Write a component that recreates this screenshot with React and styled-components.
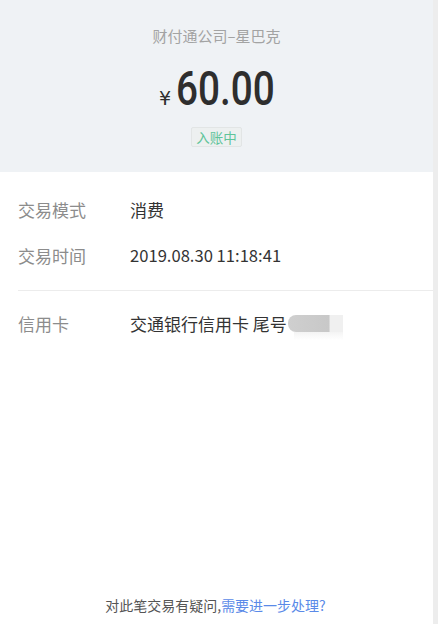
import React from "react";
import styled, { createGlobalStyle } from "styled-components";

const Global = createGlobalStyle`
  html, body { margin: 0; padding: 0; background: #fff; }
  body { font-family: "Noto Sans CJK SC", "Noto Sans", sans-serif; }
`;

const Shell = styled.div`
  display: flex;
  min-height: 100vh;
`;

const Main = styled.div`
  flex: 1;
  display: flex;
  flex-direction: column;
  background: #fff;
`;

const Gutter = styled.div`
  width: 5px;
  background: #ededed;
`;

const Header = styled.header`
  height: 172px;
  background: #eff2f5;
  display: flex;
  flex-direction: column;
  align-items: center;
  box-sizing: border-box;
  padding-top: 26px;
`;

const Merchant = styled.div`
  font-size: 15px;
  line-height: 20px;
  color: #a3a3a3;
`;

const Amount = styled.div`
  display: flex;
  align-items: baseline;
  margin-top: 15px;
  color: #2e2e2e;
  height: 56px;
`;

const Yen = styled.span`
  font-family: "DejaVu Sans", sans-serif;
  font-size: 19px;
  margin-right: 5px;
`;

const FigureBox = styled.span`
  display: inline-block;
  width: 98px;
  overflow: visible;
  white-space: nowrap;
`;

const Figure = styled.span`
  display: inline-block;
  font-family: Roboto, "Liberation Sans", sans-serif;
  font-weight: 500;
  font-size: 49px;
  line-height: 56px;
  transform: scaleX(0.79);
  transform-origin: left center;
`;

const Badge = styled.span`
  margin-top: 10px;
  display: inline-flex;
  align-items: center;
  height: 20px;
  box-sizing: border-box;
  padding: 0 4px;
  font-size: 13.5px;
  color: #5fc49a;
  background: #edf0f0;
  border: 1px solid #e2e5e5;
  border-radius: 2px;
`;

const Section = styled.section`
  padding: ${(p) => p.$pad};
  margin-left: 18px;
  border-bottom: ${(p) => (p.$divider ? "1px solid #ececec" : "none")};
`;

const Row = styled.div`
  display: flex;
  align-items: center;
  height: 46px;
  font-size: 17px;
`;

const Label = styled.span`
  width: 112px;
  color: #8c8c8c;
`;

const Value = styled.span`
  color: #333;
  display: flex;
  align-items: center;
  font-size: ${(p) => (p.$num ? "16.6px" : "17px")};
`;

const Mask = styled.span`
  position: relative;
  display: inline-block;
  width: 55px;
  height: 17px;
  margin-left: 1px;
  background: linear-gradient(to right, #cfcfcf 0%, #c8c8c8 75%, #f0f0f0 76%, #f0f0f0 100%);
  border-radius: 8px 0 0 8px;
  &::after {
    content: "";
    position: absolute;
    left: 6px;
    right: 0;
    top: 17px;
    height: 8px;
    background: linear-gradient(to bottom, #f4f4f4, #fff);
  }
`;

const Spacer = styled.div`
  flex: 1;
`;

const Footer = styled.footer`
  text-align: center;
  font-size: 14px;
  line-height: 20px;
  color: #555;
  padding-bottom: 9px;
  padding-right: 2px;
`;

const Link = styled.a`
  color: #5a8ae8;
  text-decoration: none;
`;

export default function App() {
  return (
    <>
      <Global />
      <Shell>
        <Main>
          <Header>
            <Merchant>财付通公司–星巴克</Merchant>
            <Amount>
              <Yen>¥</Yen>
              <FigureBox>
                <Figure>60.00</Figure>
              </FigureBox>
            </Amount>
            <Badge>入账中</Badge>
          </Header>
          <Section $pad="14px 0 12px" $divider>
            <Row>
              <Label>交易模式</Label>
              <Value>消费</Value>
            </Row>
            <Row>
              <Label>交易时间</Label>
              <Value $num>2019.08.30 11:18:41</Value>
            </Row>
          </Section>
          <Section $pad="9px 0 0">
            <Row>
              <Label>信用卡</Label>
              <Value>
                交通银行信用卡 尾号
                <Mask />
              </Value>
            </Row>
          </Section>
          <Spacer />
          <Footer>
            对此笔交易有疑问,<Link href="#">需要进一步处理?</Link>
          </Footer>
        </Main>
        <Gutter />
      </Shell>
    </>
  );
}
